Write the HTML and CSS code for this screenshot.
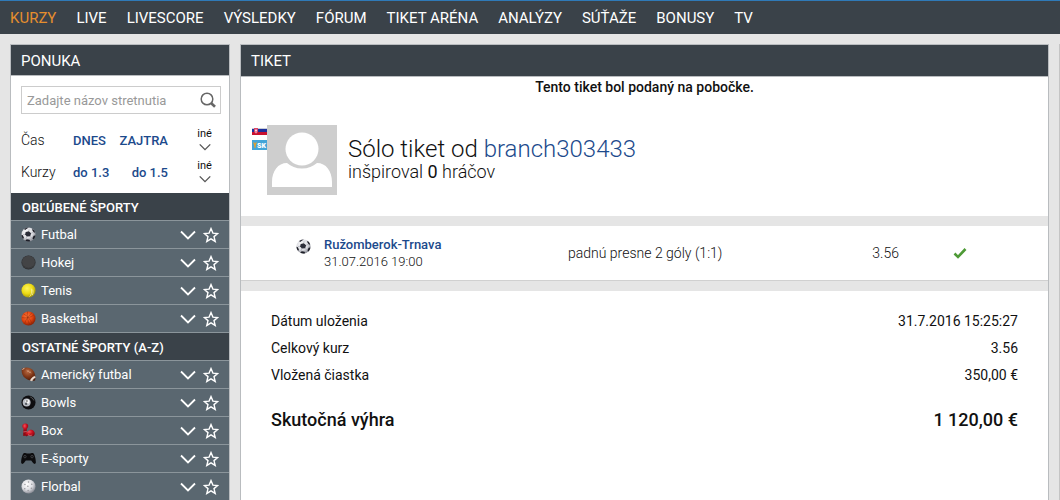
FILE: index.html
```html
<!DOCTYPE html>
<html lang="sk">
<head>
  <meta charset="UTF-8" />
  <meta name="viewport" content="width=device-width, initial-scale=1.0"/>
  <title>Tiket</title>
  <link rel="stylesheet" href="styles.css">
</head>
<body>

  <!-- Shared icons -->
  <svg class="sprite" aria-hidden="true">
    <defs>
      <radialGradient id="gBall" cx="40%" cy="35%" r="65%"><stop offset="0" stop-color="#fff"/><stop offset="0.6" stop-color="#dcdde2"/><stop offset="1" stop-color="#8d8f98"/></radialGradient>
      <radialGradient id="gYellow" cx="40%" cy="35%" r="65%"><stop offset="0" stop-color="#fdf45a"/><stop offset="0.6" stop-color="#ecd913"/><stop offset="1" stop-color="#a89a0a"/></radialGradient>
      <radialGradient id="gOrange" cx="40%" cy="35%" r="65%"><stop offset="0" stop-color="#ff7a3a"/><stop offset="0.6" stop-color="#df4310"/><stop offset="1" stop-color="#8e2306"/></radialGradient>
      <radialGradient id="gBrown" cx="45%" cy="30%" r="70%"><stop offset="0" stop-color="#b96a42"/><stop offset="0.6" stop-color="#7c3415"/><stop offset="1" stop-color="#4a1c0a"/></radialGradient>
      <radialGradient id="gRed" cx="40%" cy="30%" r="70%"><stop offset="0" stop-color="#f0525c"/><stop offset="0.5" stop-color="#c9101f"/><stop offset="1" stop-color="#7d0710"/></radialGradient>
    </defs>
    <symbol id="chevron" viewBox="0 0 16 10">
      <path d="M1 1.5l7 7 7-7" fill="none" stroke="currentColor" stroke-width="1.8"/>
    </symbol>
    <symbol id="star" viewBox="0 0 16 16">
      <path d="M8 1.6l1.9 4.5 4.8.4-3.7 3.1 1.2 4.8L8 11.8l-4.2 2.6L5 9.6 1.300 6.500l4.800-.4z" fill="none" stroke="currentColor" stroke-width="1.4"/>
    </symbol>
    <symbol id="football" viewBox="0 0 16 16">
      <circle cx="8" cy="8" r="7.500" fill="url(#gBall)"/>
      <path d="M5 5.400l3.300-1 2.500 2.200-1 3.200-3.700.3-1.700-2.400z" fill="#2b2d38"/>
      <path d="M3.300 2.200l2.600-1.500 2.500-.2-2.300 1.300-1.700 1.400zM12 1.800c1.500 1 2.600 2.300 3 3.900l-1 .5-1.700-2.100zM15.400 9c-.2 1.600-1 3.100-2.200 4.300l-1-1.300 1.300-2.700zM4.500 14.600c1.800.9 3.500 1 5.300.6l-.7-1.500-3-.6zM.500 8.300c0 1.600.7 3.200 1.800 4.500l.8-1.500-1.200-2.600z" fill="#1d1e27"/>
      <path d="M8.300 4.400l.3-2M10.800 6.600l2-.8M9.800 9.800l1.400 1.800M6.100 10.100l-.6 2.200M4.400 7.700l-2.200.4" stroke="#9a9ca6" stroke-width=".6"/>
    </symbol>
    <symbol id="puck" viewBox="0 0 16 16">
      <circle cx="8" cy="8" r="7.500" fill="#292a2c"/>
      <ellipse cx="8" cy="7.200" rx="7" ry="6.300" fill="#434446"/>
      <path d="M1 9.500c1.500 3.700 4.500 4.500 7 4.500s5.500-.8 7-4.500" fill="none" stroke="#5b5c5e" stroke-width=".5"/>
    </symbol>
    <symbol id="tennis" viewBox="0 0 16 16">
      <circle cx="8" cy="8" r="7.500" fill="url(#gYellow)"/>
      <path d="M9 14.500c2.500-1.500 2.500-5 2-8.500M12 13c1-2 1-4 .5-6" fill="none" stroke="#f8f3a8" stroke-width=".8"/>
    </symbol>
    <symbol id="basket" viewBox="0 0 16 16">
      <circle cx="8" cy="8" r="7.500" fill="url(#gOrange)"/>
      <path d="M1 7c4 1 10 0 13-3M7 .6c-1 5 0 11 3 14.500M2.500 3c4 2 8 6 9.500 11M12 1.700C8 5 5 9 3.800 14" fill="none" stroke="#8e2a0c" stroke-width=".5"/>
    </symbol>
    <symbol id="amfootball" viewBox="0 0 16 16">
      <path d="M1 1.500C6-.5 11 .5 13.500 4.500c2 3.300 2.200 7 1.500 10-4 .8-8-.2-11-3C1 8.700.2 5 1 1.500z" fill="url(#gBrown)"/>
      <path d="M14.900 9.800c-2.200.6-4.200 2.200-5 4.600l2 .4c.7-1.700 1.700-2.800 3.300-3.400zM1 2.600c1.300-.1 2.200-.6 2.900-1.700" stroke="#f1dfd2" stroke-width=".5" fill="#f1dfd2"/>
      <path d="M6 3.500l5 3M7 5.200l1-1.500M9 6.400l1-1.500" stroke="#d8a98c" stroke-width=".6"/>
    </symbol>
    <symbol id="bowl" viewBox="0 0 16 16">
      <circle cx="8" cy="8" r="7.500" fill="#0d0d10"/>
      <circle cx="6" cy="8" r="4.200" fill="#b9bdc4"/>
      <circle cx="6.800" cy="7.200" r="2.300" fill="#f5f5f5"/>
      <circle cx="6.300" cy="6.400" r=".8" fill="#333"/>
      <circle cx="5.500" cy="9.300" r="1.300" fill="#555a62"/>
      <path d="M10 2.200c1.800.8 3 2 3.700 3.600" stroke="#666" fill="none"/>
    </symbol>
    <symbol id="gloves" viewBox="0 0 16 16">
      <path d="M2 1.500c1.500-1.400 4.200-1 5.200.2 1 1.500.3 3.400-.9 4.300L6 9H2.500l.2-3.200C1.200 4.800 1 2.700 2 1.500z" fill="url(#gRed)"/>
      <path d="M2.300 8.500h4l.4 4.700-4.400.7z" fill="#8d0a14"/>
      <path d="M7 9c2-2.300 5-2.200 6.600-.4 1.800 2 1.300 4.600-.7 5.400-1.700.7-3.700-.3-4.600-1l-3 1.300L4.500 11z" fill="url(#gRed)"/>
      <path d="M2.400 9.500l3.800-.4M7.500 12.300c1.500 1.300 3 1.200 4.500.5" stroke="#f29aa0" stroke-width=".6" fill="none"/>
    </symbol>
    <symbol id="gamepad" viewBox="0 0 16 16">
      <path d="M2.500 2.600c1.500-.9 3-.6 3.800.1h3.400c.8-.7 2.300-1 3.800-.1 1.300 1.800 2.600 7.400 2.300 10-.3 1.500-2 1.500-2.900.3l-2-2.900H5.100l-2 2.900c-.9 1.200-2.600 1.200-2.900-.3C-.1 10 1.200 4.400 2.500 2.600z" fill="#0c0c0e"/>
      <circle cx="4.200" cy="6" r="1.300" fill="none" stroke="#5c6066" stroke-width=".6"/>
      <circle cx="11.800" cy="6" r="1.300" fill="none" stroke="#5c6066" stroke-width=".6"/>
    </symbol>
    <symbol id="floorball" viewBox="0 0 16 16">
      <circle cx="8" cy="8" r="7.500" fill="url(#gBall)"/>
      <g fill="#96979c"><circle cx="8" cy="3.300" r=".8"/><circle cx="4.200" cy="5.800" r=".8"/><circle cx="11.500" cy="5.500" r=".8"/><circle cx="7.300" cy="7.800" r=".8"/><circle cx="4" cy="10.500" r=".8"/><circle cx="11" cy="9.800" r=".8"/><circle cx="7.600" cy="12.300" r=".8"/></g>
    </symbol>
  </svg>

  <!-- Main navigation -->
  <nav class="topnav">
    <a href="#" class="active">KURZY</a>
    <a href="#">LIVE</a>
    <a href="#">LIVESCORE</a>
    <a href="#">VÝSLEDKY</a>
    <a href="#">FÓRUM</a>
    <a href="#">TIKET ARÉNA</a>
    <a href="#">ANALÝZY</a>
    <a href="#">SÚŤAŽE</a>
    <a href="#">BONUSY</a>
    <a href="#">TV</a>
  </nav>

  <div class="layout">

    <!-- Offer -->
    <aside class="panel sidebar">
      <h2 class="panel-title">PONUKA</h2>
      <form class="search">
        <input type="text" placeholder="Zadajte názov stretnutia" aria-label="Zadajte názov stretnutia">
        <button type="button" aria-label="Hľadať">
          <svg viewBox="0 0 16 16"><circle cx="7" cy="7" r="5.800" fill="none" stroke="#666" stroke-width="1.500"/><path d="M11 11l4 3.800" stroke="#666" stroke-width="2.600"/></svg>
        </button>
      </form>
      <div class="filters">
        <div class="filter">
          <span class="filter-name">Čas</span>
          <a href="#">DNES</a>
          <a href="#">ZAJTRA</a>
          <button type="button" class="more">iné<svg><use href="#chevron"/></svg></button>
        </div>
        <div class="filter">
          <span class="filter-name">Kurzy</span>
          <a href="#">do 1.3</a>
          <a href="#">do 1.5</a>
          <button type="button" class="more">iné<svg><use href="#chevron"/></svg></button>
        </div>
      </div>

      <h3 class="sports-title">OBĽÚBENÉ ŠPORTY</h3>
      <ul class="sports">
        <li><svg class="ico"><use href="#football"/></svg><a href="#">Futbal</a><button type="button" aria-label="Rozbaliť"><svg class="chev"><use href="#chevron"/></svg></button><button type="button" aria-label="Obľúbené"><svg class="star"><use href="#star"/></svg></button></li>
        <li><svg class="ico"><use href="#puck"/></svg><a href="#">Hokej</a><button type="button" aria-label="Rozbaliť"><svg class="chev"><use href="#chevron"/></svg></button><button type="button" aria-label="Obľúbené"><svg class="star"><use href="#star"/></svg></button></li>
        <li><svg class="ico"><use href="#tennis"/></svg><a href="#">Tenis</a><button type="button" aria-label="Rozbaliť"><svg class="chev"><use href="#chevron"/></svg></button><button type="button" aria-label="Obľúbené"><svg class="star"><use href="#star"/></svg></button></li>
        <li><svg class="ico"><use href="#basket"/></svg><a href="#">Basketbal</a><button type="button" aria-label="Rozbaliť"><svg class="chev"><use href="#chevron"/></svg></button><button type="button" aria-label="Obľúbené"><svg class="star"><use href="#star"/></svg></button></li>
      </ul>

      <h3 class="sports-title">OSTATNÉ ŠPORTY (A-Z)</h3>
      <ul class="sports">
        <li><svg class="ico"><use href="#amfootball"/></svg><a href="#">Americký futbal</a><button type="button" aria-label="Rozbaliť"><svg class="chev"><use href="#chevron"/></svg></button><button type="button" aria-label="Obľúbené"><svg class="star"><use href="#star"/></svg></button></li>
        <li><svg class="ico"><use href="#bowl"/></svg><a href="#">Bowls</a><button type="button" aria-label="Rozbaliť"><svg class="chev"><use href="#chevron"/></svg></button><button type="button" aria-label="Obľúbené"><svg class="star"><use href="#star"/></svg></button></li>
        <li><svg class="ico"><use href="#gloves"/></svg><a href="#">Box</a><button type="button" aria-label="Rozbaliť"><svg class="chev"><use href="#chevron"/></svg></button><button type="button" aria-label="Obľúbené"><svg class="star"><use href="#star"/></svg></button></li>
        <li><svg class="ico"><use href="#gamepad"/></svg><a href="#">E-športy</a><button type="button" aria-label="Rozbaliť"><svg class="chev"><use href="#chevron"/></svg></button><button type="button" aria-label="Obľúbené"><svg class="star"><use href="#star"/></svg></button></li>
        <li><svg class="ico"><use href="#floorball"/></svg><a href="#">Florbal</a><button type="button" aria-label="Rozbaliť"><svg class="chev"><use href="#chevron"/></svg></button><button type="button" aria-label="Obľúbené"><svg class="star"><use href="#star"/></svg></button></li>
      </ul>
    </aside>

    <!-- Ticket -->
    <main class="panel ticket">
      <h1 class="panel-title">TIKET</h1>
      <p class="notice">Tento tiket bol podaný na pobočke.</p>

      <section class="author">
        <div class="flags">
          <svg viewBox="0 0 15 7"><path fill="#c9ced8" d="M0 0h15v1H0z"/><path fill="#1c2f9c" d="M0 1h15v3H0z"/><path fill="#c8102e" d="M0 4h15v3H0z"/><path fill="#d8456a" d="M2 0h4v4L4 6 2 4z"/><path stroke="#fff" stroke-width=".7" d="M4 1v4M3 2.500h2"/></svg>
          <svg viewBox="0 0 15 10"><path fill="#43a5d8" d="M0 0h15v10H0z"/><path fill="#d9a13a" d="M1 2l2 1 2-1-1 3-.5 3h-1L2 5z"/><text x="5" y="8" class="flag-text">SK</text></svg>
        </div>
        <svg class="avatar" viewBox="0 0 70 70">
          <path fill="#cecece" d="M0 0h70v70H0z"/>
          <path fill="#fff" d="M5 62V57C5 46 11 38 20 38c4 3.500 9 5.500 15 5.500S46 41.500 50 38c9 0 15 8 15 19v5z"/>
          <circle cx="35" cy="24" r="16.500" fill="#fff"/>
        </svg>
        <div>
          <p class="author-name">Sólo tiket od <a href="#">branch303433</a></p>
          <p class="author-info">inšpiroval <b>0</b> hráčov</p>
        </div>
      </section>

      <table class="bets">
        <tr>
          <td class="bet-icon"><svg class="ico"><use href="#football"/></svg></td>
          <td class="bet-match"><a href="#">Ružomberok-Trnava</a><time>31.07.2016 19:00</time></td>
          <td class="bet-tip">padnú presne 2 góly (1:1)</td>
          <td class="bet-odds">3.56</td>
          <td class="bet-state"><svg viewBox="0 0 14 12" role="img" aria-label="Výhra"><path d="M1.500 6.500l3.500 3.500 7.500-8" fill="none" stroke="#4e9a36" stroke-width="2.600"/></svg></td>
        </tr>
      </table>

      <table class="summary">
        <tr><th>Dátum uloženia</th><td>31.7.2016 15:25:27</td></tr>
        <tr><th>Celkový kurz</th><td>3.56</td></tr>
        <tr><th>Vložená čiastka</th><td>350,00 €</td></tr>
        <tr class="total"><th>Skutočná výhra</th><td>1 120,00 €</td></tr>
      </table>
    </main>

    <div class="edge"></div>
  </div>

</body>
</html>
```
FILE: styles.css
```css
* { margin: 0; padding: 0; box-sizing: border-box; }

body {
  display: flex;
  flex-direction: column;
  height: 100vh;
  overflow: hidden;
  background: #e5e5e5;
  color: #111;
  font-family: Roboto, sans-serif;
  font-size: 14px;
}

a {
  color: #1c4a8c;
  text-decoration: none;
}

button {
  background: none;
  border: none;
  font: inherit;
  color: inherit;
  cursor: pointer;
}

svg { display: block; }

.sprite {
  position: absolute;
  width: 0;
  height: 0;
}

/* Navigation */
.topnav {
  display: flex;
  flex-shrink: 0;
  gap: 20px;
  height: 34px;
  padding: 0 10px;
  border-top: 1px solid #2f7ab8;
  background: #3a4249;
  line-height: 34px;
}

.topnav a {
  color: #fff;
  font-size: 15px;
}

.topnav a.active { color: #e58e2e; }

/* Columns */
.layout {
  display: grid;
  grid-template-columns: 220px 1fr 1px;
  gap: 10px;
  flex: 1;
  min-height: 0;
  padding: 10px 0 0 10px;
}

.panel {
  border: 1px solid #b9bcbf;
  border-bottom: none;
  background: #fff;
  overflow: hidden;
}

.panel-title {
  height: 31px;
  padding-left: 10px;
  border-bottom: 1px solid #b9bcbf;
  background: #3a4249;
  color: #fff;
  font-size: 15px;
  font-weight: 400;
  line-height: 32px;
}

.ticket .panel-title { height: 32px; }

.edge { background: #c4c4c4; }

/* Search and filters */
.search {
  display: flex;
  align-items: center;
  height: 28px;
  margin: 10px 8px 0 10px;
  border: 1px solid #ccc;
}

.search input {
  flex: 1;
  min-width: 0;
  padding-left: 5px;
  border: none;
  outline: none;
  font: 13px Roboto, sans-serif;
}

.search input::placeholder { color: #999; }

.search button { margin-right: 4px; }

.search svg {
  width: 16px;
  height: 16px;
}

.filters { padding: 10px 0 5px 10px; }

.filter {
  display: grid;
  grid-template-columns: 52px 40px 55px 1fr;
  align-items: center;
  height: 32px;
}

.filter-name { font-weight: 300; }

.filter a {
  font-size: 13px;
  font-weight: 500;
  white-space: nowrap;
}

.filter a + a { text-align: right; }

.more {
  display: flex;
  flex-direction: column;
  align-items: center;
  gap: 3px;
  padding: 0 0 2px 12px;
  font-size: 11px;
  line-height: 12px;
}

.more svg {
  width: 12px;
  height: 8px;
  color: #555;
}

/* Sports */
.sports-title {
  height: 27px;
  padding-left: 11px;
  background: #3a4249;
  color: #fff;
  font-size: 13px;
  font-weight: 500;
  line-height: 29px;
}

.sports { list-style: none; }

.sports + .sports-title {
  height: 28px;
  border-top: 1px solid #8b959b;
}

.sports li {
  display: flex;
  align-items: center;
  gap: 7px;
  height: 28px;
  padding: 0 10px;
  border-top: 1px solid #8b959b;
  background: #5a6770;
  color: #fff;
}

.ico {
  width: 15px;
  height: 15px;
}

.sports a {
  flex: 1;
  margin-left: -2px;
  color: #fff;
  font-size: 13px;
}

.chev {
  width: 16px;
  height: 10px;
}

.star {
  width: 16px;
  height: 16px;
}

/* Ticket */
.notice {
  height: 20px;
  font-weight: 500;
  line-height: 20px;
  text-align: center;
}

.author {
  display: flex;
  height: 119px;
  padding: 28px 11px 0;
}

.flags {
  width: 15px;
  padding-top: 3px;
}

.flags svg + svg { margin-top: 5px; }

.flag-text {
  fill: #fff;
  font-size: 7px;
  font-weight: 900;
}

.avatar {
  width: 70px;
  height: 70px;
  margin-right: 11px;
}

.author-name {
  padding-top: 10px;
  font-size: 24px;
  font-weight: 300;
  line-height: 28px;
}

.author-info {
  font-size: 18px;
  font-weight: 300;
  line-height: 18px;
}

.author-info b { font-weight: 400; }

/* Bets */
.bets {
  width: 100%;
  border-top: 10px solid #e5e5e5;
  border-bottom: 10px solid #e5e5e5;
  border-spacing: 0;
  table-layout: fixed;
}

.bets tr {
  height: 55px;
  font-weight: 300;
}

.bets td { border-bottom: 1px solid #d0d0d0; }

.bet-icon {
  width: 83px;
  padding: 13px 0 0 55px;
  vertical-align: top;
}

.bet-match {
  width: 244px;
  font-size: 13px;
  line-height: 17px;
}

.bet-match a {
  display: block;
  font-weight: 500;
}

.bet-odds {
  width: 60px;
  text-align: right;
}

.bet-state {
  width: 149px;
  padding-left: 54px;
}

.bet-state svg {
  width: 14px;
  height: 12px;
}

/* Summary */
.summary {
  width: 100%;
  padding: 16px 30px 0;
  border-spacing: 0;
}

.summary tr { height: 27px; }

.summary th {
  font-weight: 400;
  text-align: left;
}

.summary td { text-align: right; }

.summary .total { height: 63px; }

.summary .total th,
.summary .total td {
  font-size: 18px;
  font-weight: 500;
}
```
